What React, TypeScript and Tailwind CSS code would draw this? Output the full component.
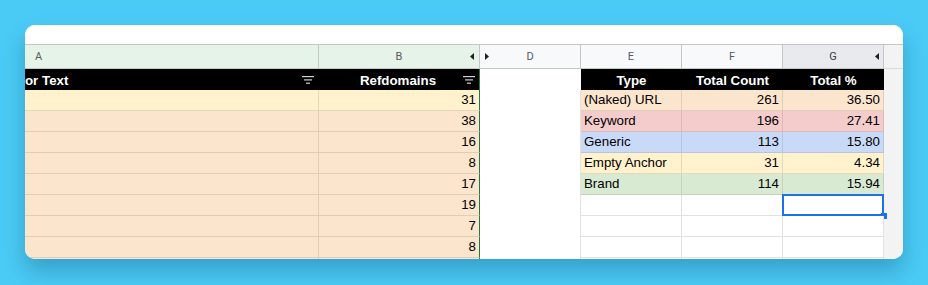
import React from 'react';

const cellFont = "font-['Liberation_Sans',Arial,sans-serif] text-[13.3px] leading-[15px] text-black";
const cols = 'grid grid-cols-[294px_161px_101px_101px_101px_101px_1fr]';

// bg + matching gridline tone
const tones = {
	orange: { bg: 'bg-[#fce5cd]', line: 'border-[#e0cdb7]' },
	yellow: { bg: 'bg-[#fff2cc]', line: 'border-[#e3d9b8]' },
	red: { bg: 'bg-[#f4cccc]', line: 'border-[#dcb9b9]' },
	blue: { bg: 'bg-[#c9daf8]', line: 'border-[#b5c5e0]' },
	green: { bg: 'bg-[#d9ead3]', line: 'border-[#c3d3be]' },
	white: { bg: 'bg-white', line: 'border-[#e2e2e2]' },
};

const leftRows = [
	{ v: '31', t: tones.yellow },
	{ v: '38', t: tones.orange },
	{ v: '16', t: tones.orange },
	{ v: '8', t: tones.orange },
	{ v: '17', t: tones.orange },
	{ v: '19', t: tones.orange },
	{ v: '7', t: tones.orange },
	{ v: '8', t: tones.orange },
	{ v: '', t: tones.orange },
];

const rightRows = [
	{ type: '(Naked) URL', count: '261', pct: '36.50', t: tones.orange },
	{ type: 'Keyword', count: '196', pct: '27.41', t: tones.red },
	{ type: 'Generic', count: '113', pct: '15.80', t: tones.blue },
	{ type: 'Empty Anchor', count: '31', pct: '4.34', t: tones.yellow },
	{ type: 'Brand', count: '114', pct: '15.94', t: tones.green },
];

const FilterIcon = () => (
	<svg width="12" height="8" viewBox="0 0 12 8" className="shrink-0">
		<rect x="0" y="0" width="12" height="1.2" fill="#d0d0d0" />
		<rect x="2" y="3.3" width="8" height="1.2" fill="#d0d0d0" />
		<rect x="4" y="6.6" width="4" height="1.2" fill="#d0d0d0" />
	</svg>
);

const Arrow = ({ dir }: { dir: 'left' | 'right' }) => (
	<svg width="4" height="7" viewBox="0 0 4 7">
		{dir === 'left' ? <polygon points="4,0 4,7 0,3.5" fill="#202124" /> : <polygon points="0,0 0,7 4,3.5" fill="#202124" />}
	</svg>
);

const hdr = 'border-r border-b border-[#c4c7c5]';

export default function App() {
	return (
		<div className="min-h-[285px] w-[928px] bg-[#4acbf5] pl-[25px] pt-[25px]">
			<div className="h-[234px] w-[878px] overflow-hidden rounded-[10px] bg-white shadow-[0_12px_22px_rgba(0,50,90,0.28)]">
				<div className="h-[20px] border-b border-[#c4c7c5] bg-white" />

				{/* column letters */}
				<div className={`${cols} h-[24px] font-['Roboto',Arial,sans-serif] text-[11px] leading-[13px] text-[#575b5f]`}>
					<div className={`flex items-center bg-[#e6f3e8] pl-[10px] ${hdr}`}>A</div>
					<div className={`relative flex items-center justify-center bg-[#e6f3e8] ${hdr}`}>
						B
						<span className="absolute right-[5px] top-[8px] flex">
							<Arrow dir="left" />
						</span>
					</div>
					<div className={`relative flex items-center justify-center bg-[#f8f9fa] ${hdr}`}>
						<span className="absolute left-[5px] top-[8px] flex">
							<Arrow dir="right" />
						</span>
						D
					</div>
					<div className={`flex items-center justify-center bg-[#f8f9fa] ${hdr}`}>E</div>
					<div className={`flex items-center justify-center bg-[#f8f9fa] ${hdr}`}>F</div>
					<div className={`relative flex items-center justify-center bg-[#e8eaed] text-[#3c4043] ${hdr}`}>
						G
						<span className="absolute right-[4px] top-[8px] flex">
							<Arrow dir="left" />
						</span>
					</div>
					<div className="border-b border-[#dadada] bg-[#f3f3f3]" />
				</div>

				{/* header row */}
				<div className={`${cols} h-[21px] font-['Liberation_Sans',Arial,sans-serif] text-[13.3px] leading-[15px] font-bold text-white`}>
					<div className="flex items-center whitespace-nowrap bg-black pr-[5px] pt-[1px]">
						<span className="flex-1">or Text</span>
						<FilterIcon />
					</div>
					<div className="flex items-center border-r border-[#227a3c] bg-black pr-[4px] pt-[1px]">
						<span className="flex-1 pl-[14px] text-center">Refdomains</span>
						<FilterIcon />
					</div>
					<div className="bg-white" />
					<div className="flex items-center justify-center bg-black pt-[1px]">Type</div>
					<div className="flex items-center justify-center bg-black pt-[1px]">Total Count</div>
					<div className="flex items-center justify-center bg-black pt-[1px]">Total %</div>
					<div className="bg-[#f3f3f3]" />
				</div>

				{/* data rows */}
				{leftRows.map((l, i) => {
					const r = rightRows[i];
					const rt = r ? r.t : tones.white;
					return (
						<div key={i} className={`${cols} h-[21px] ${cellFont}`}>
							<div className={`border-r border-b ${l.t.line} ${l.t.bg}`} />
							<div className={`flex items-end justify-end border-b ${l.t.line} border-r border-r-[#227a3c] pb-[3px] pr-[3px] ${l.t.bg}`}>
								{l.v}
							</div>
							<div className="border-r border-[#e2e2e2] bg-white" />
							<div className={`flex items-end border-r border-b pb-[3px] pl-[3px] ${rt.line} ${rt.bg}`}>{r?.type}</div>
							<div className={`flex items-end justify-end border-r border-b pb-[3px] pr-[3px] ${rt.line} ${rt.bg}`}>{r?.count}</div>
							<div className={`relative flex items-end justify-end border-r border-b pb-[3px] pr-[3px] ${rt.line} ${rt.bg}`}>
								{r?.pct}
								{i === 5 && (
									<>
										<div className="absolute left-[-1px] top-[-1px] h-[22px] w-[102px] border-2 border-[#1a73e8]" />
										<div className="absolute bottom-[-4px] right-[-4px] h-[6px] w-[6px] bg-[#1a73e8]" />
									</>
								)}
							</div>
							<div className="bg-[#f3f3f3]" />
						</div>
					);
				})}
			</div>
		</div>
	);
}
